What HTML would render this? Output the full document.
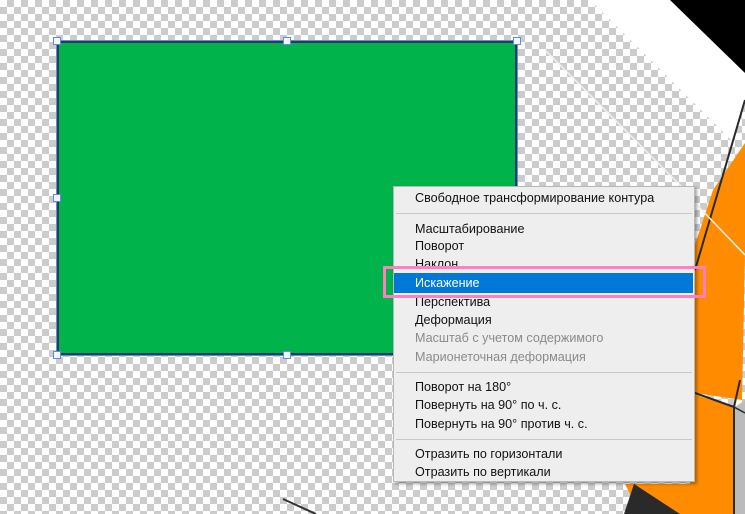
<!DOCTYPE html>
<html><head><meta charset="utf-8"><style>
*{margin:0;padding:0;box-sizing:border-box}
body{width:745px;height:514px;overflow:hidden;position:relative;
background-color:#fff;
background-image:linear-gradient(45deg,#ccc 25%,transparent 25%,transparent 75%,#ccc 75%),linear-gradient(45deg,#ccc 25%,transparent 25%,transparent 75%,#ccc 75%);
background-size:14px 14px;background-position:0 0,7px 7px;
font-family:"Liberation Sans","DejaVu Sans",sans-serif;}
svg.bg{position:absolute;left:0;top:0}
.rect{position:absolute;left:57px;top:41px;width:460px;height:314px;background:#00b34a;border:2px solid #2a3a5a;box-shadow:0 0 0 1px #5b8de0}
.h{position:absolute;width:8px;height:8px;background:#f4f6ff;border:1.5px solid #5b8de0}
.menu{position:absolute;left:393px;top:186px;width:302px;height:296px;background:#eeeeee;border:1px solid #b8b8b8;box-shadow:2px 2px 3px rgba(0,0,0,.35)}
.t{position:absolute;left:21px;font-size:12.6px;color:#111;line-height:14px;white-space:nowrap}
.g{color:#8a8a8a}
.sep{position:absolute;left:2px;right:2px;height:1px;background:#c8c8c8}
.hl{position:absolute;left:0;top:86px;width:299px;height:20px;background:#0078d7}
.pink{position:absolute;left:383px;top:266px;width:323px;height:32px;border:3px solid #ff80c0}
</style></head><body>
<svg class="bg" width="745" height="514">
<polygon points="590,0 670,0 745,73 745,100 733,142" fill="#fff"/>
<polygon points="670,0 745,0 745,73" fill="#000"/>
<line x1="545" y1="50" x2="695" y2="200" stroke="#f2f2f2" stroke-width="1.5"/>
<polygon points="745,143 745,255 742,400 695,393 690,260 713,190" fill="#ff8c00"/>
<polygon points="690,393 733,407 733,514 640,514 625,484 690,484" fill="#ff8c00"/>
<polygon points="735,407 745,400 745,514 735,514" fill="#bbb"/>
<line x1="745" y1="100" x2="695" y2="270" stroke="#2a2a2a" stroke-width="2"/>
<line x1="697" y1="205" x2="745" y2="255" stroke="#f2f2f2" stroke-width="1.5"/>
<line x1="695" y1="393" x2="734" y2="407" stroke="#2a2a2a" stroke-width="2"/>
<line x1="740" y1="380" x2="734" y2="407" stroke="#2a2a2a" stroke-width="2"/>
<line x1="734" y1="407" x2="734" y2="514" stroke="#2a2a2a" stroke-width="2"/>
<line x1="734" y1="407" x2="745" y2="413" stroke="#2a2a2a" stroke-width="1.5"/>
<polygon points="634,484 680,514 624,514" fill="#2a2a2a"/>
<line x1="283" y1="499" x2="316" y2="514" stroke="#333" stroke-width="2"/>
</svg>
<div class="rect"></div>
<div class="h" style="left:53px;top:37px"></div>
<div class="h" style="left:283px;top:37px"></div>
<div class="h" style="left:513px;top:37px"></div>
<div class="h" style="left:53px;top:194px"></div>
<div class="h" style="left:53px;top:351px"></div>
<div class="h" style="left:283px;top:351px"></div>
<div class="menu">
<div class="t" style="top:4px">Свободное трансформирование контура</div>
<div class="sep" style="top:26px"></div>
<div class="t" style="top:35px">Масштабирование</div>
<div class="t" style="top:52px">Поворот</div>
<div class="t" style="top:70px">Наклон</div>
<div class="hl"></div>
<div class="t" style="top:89px;color:#fff">Искажение</div>
<div class="t" style="top:108px">Перспектива</div>
<div class="t" style="top:126px">Деформация</div>
<div class="t g" style="top:144px">Масштаб с учетом содержимого</div>
<div class="t g" style="top:163px">Марионеточная деформация</div>
<div class="sep" style="top:185px"></div>
<div class="t" style="top:193px">Поворот на 180°</div>
<div class="t" style="top:211px">Повернуть на 90° по ч. с.</div>
<div class="t" style="top:230px">Повернуть на 90° против ч. с.</div>
<div class="sep" style="top:252px"></div>
<div class="t" style="top:260px">Отразить по горизонтали</div>
<div class="t" style="top:278px">Отразить по вертикали</div>
</div>
<div class="pink"></div>
</body></html>
